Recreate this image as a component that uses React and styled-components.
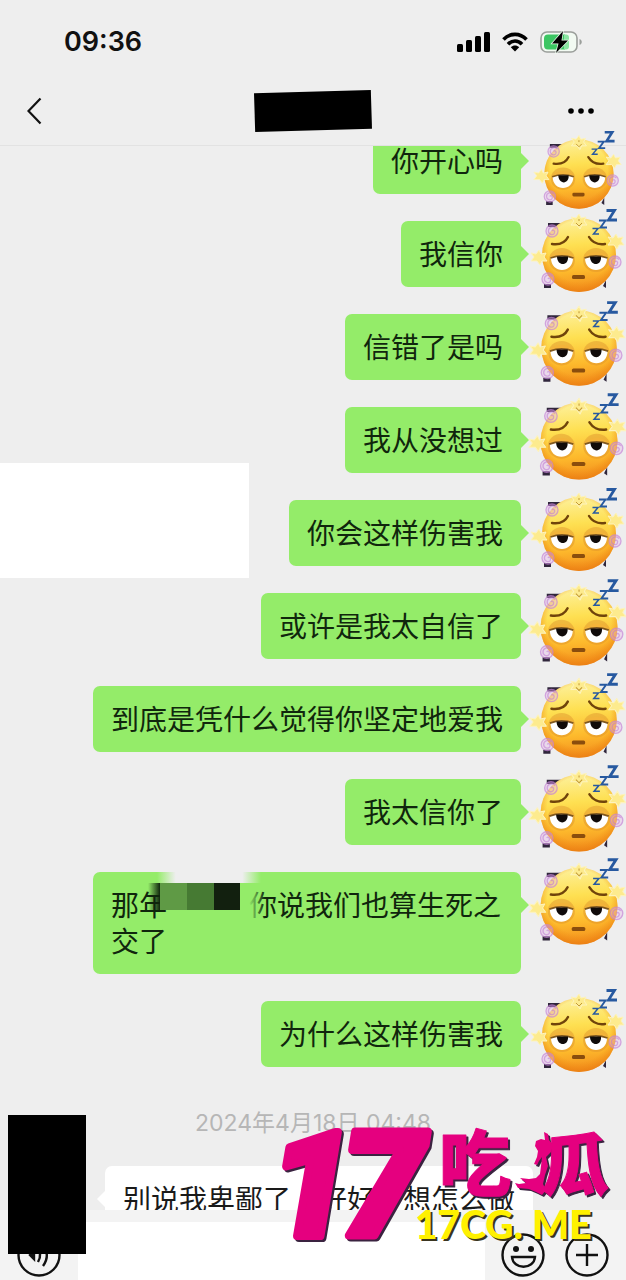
import React from 'react';
import styled, { createGlobalStyle } from 'styled-components';

const GlobalStyle = createGlobalStyle`
  * {
    box-sizing: border-box;
  }
  body {
    margin: 0;
    background: #eeeeee;
    font-family: Inter, "Noto Sans CJK SC", sans-serif;
    color: #111111;
  }
  button {
    display: block;
    border: 0;
    padding: 0;
    background: none;
    color: inherit;
    cursor: pointer;
  }
  svg {
    display: block;
    flex-shrink: 0;
  }
`;

const Page = styled.div`
  position: relative;
  display: flex;
  flex-direction: column;
  height: 100vh;
  overflow: hidden;
`;

const Header = styled.header`
  position: relative;
  z-index: 1;
  flex-shrink: 0;
  padding-bottom: 7px;
  background: #eeeeee;
  border-bottom: 1px solid #e2e2e2;
`;

const StatusBar = styled.div`
  display: flex;
  align-items: center;
  justify-content: space-between;
  height: 84px;
  padding: 0 42px 0 64px;
`;

const Clock = styled.time`
  font-size: 27px;
  font-weight: 600;
  line-height: 32px;
`;

const StatusIcons = styled.div`
  display: flex;
  align-items: center;
  gap: 12px;
`;

const NavBar = styled.nav`
  display: grid;
  grid-template-columns: 1fr auto 1fr;
  align-items: center;
  height: 54px;
  padding: 0 27px;
  > :last-child {
    justify-self: end;
  }
`;

const HiddenName = styled.div`
  width: 118px;
  height: 42px;
  background: #000000;
  clip-path: polygon(0 8%, 99% 0, 100% 92%, 1% 100%);
`;

const Chat = styled.main`
  flex: 1;
  min-height: 0;
  display: flex;
  flex-direction: column;
  gap: 27px;
  margin-top: -18px;
`;

const Row = styled.div`
  display: flex;
  flex-shrink: 0;
  justify-content: ${(props) => (props.$incoming ? 'flex-start' : 'flex-end')};
  gap: 9px;
  padding-left: ${(props) => (props.$incoming ? '105px' : '0')};
`;

const Bubble = styled.p`
  position: relative;
  max-width: 428px;
  margin: 0;
  padding: 14px 18px 16px;
  border-radius: 7px;
  background: ${(props) => (props.$incoming ? '#ffffff' : '#94ec69')};
  color: ${(props) => (props.$incoming ? '#1a1a1a' : '#10260d')};
  font-family: "Noto Sans CJK SC", sans-serif;
  font-size: 28px;
  line-height: 36px;
  &::after {
    content: '';
    position: absolute;
    top: 24px;
    ${(props) => (props.$incoming ? 'left' : 'right')}: -8px;
    width: 9px;
    height: 18px;
    background: inherit;
    clip-path: ${(props) => (props.$incoming
    ? 'polygon(100% 0, 100% 100%, 0 50%)'
    : 'polygon(0 0, 0 100%, 100% 50%)')};
  }
`;

const Avatar = styled.div`
  display: flex;
  align-items: ${(props) => props.$align || 'center'};
  justify-content: center;
  position: relative;
  z-index: 2;
  width: 96px;
  height: 66px;
`;

const DateLine = styled.time`
  flex-shrink: 0;
  padding-top: 13px;
  color: #b6b6b6;
  font-size: 23px;
  line-height: 32px;
  text-align: center;
`;

const Gap = styled.span`
  display: inline-block;
  position: relative;
  width: 82px;
  height: 28px;
  vertical-align: top;
`;

const Smudge = styled.span`
  position: absolute;
  top: -15px;
  left: -10px;
  width: 104px;
  height: 12px;
  background: linear-gradient(90deg, transparent, #eeeeee 18%, #eeeeee 82%, transparent);
`;

const Mosaic = styled.span`
  position: absolute;
  top: -3px;
  left: -19px;
  display: grid;
  grid-template-columns: 12px 27px 27px 26px;
  height: 27px;
  > span:nth-child(1) {
    background: linear-gradient(90deg, transparent, #10260d);
  }
  > span:nth-child(2) {
    background: #5f9a45;
  }
  > span:nth-child(3) {
    background: #467a33;
  }
  > span:nth-child(4) {
    background: #12200f;
  }
`;

const Fade = styled.span`
  position: absolute;
  z-index: 1;
  top: 0;
  left: 82px;
  width: 16px;
  height: 36px;
  background: linear-gradient(90deg, #94ec69, transparent);
`;

const Footer = styled.footer`
  position: relative;
  z-index: 1;
  flex-shrink: 0;
  display: flex;
  height: 70px;
  padding: 12px 17px 0;
  background: #f3f3f3;
`;

const IconButton = styled.button`
  flex-shrink: 0;
  width: 44px;
  height: 44px;
  margin-top: 11px;
`;

const MessageInput = styled.input`
  flex: 1;
  min-width: 0;
  margin: 0 16px 0 17px;
  border: 0;
  padding: 0 18px;
  background: #ffffff;
  font-size: 28px;
  outline: none;
`;

const Tools = styled.div`
  display: flex;
  gap: 20px;
`;

const Cover = styled.div`
  position: absolute;
  z-index: 3;
  background: ${(props) => props.$color};
`;

const SideCover = styled(Cover)`
  top: 463px;
  left: 0;
  width: 249px;
  height: 115px;
`;

const AvatarCover = styled(Cover)`
  bottom: 26px;
  left: 8px;
  width: 78px;
  height: 139px;
`;

const Watermark = styled.div`
  position: absolute;
  z-index: 4;
  right: 10px;
  bottom: 30px;
  pointer-events: none;
`;

const Signal = () => (
  <svg width="33" height="20" viewBox="0 0 33 20">
    <rect x="0" y="12" width="6" height="8" rx="1.5" />
    <rect x="9" y="8" width="6" height="12" rx="1.5" />
    <rect x="18" y="4" width="6" height="16" rx="1.5" />
    <rect x="27" y="0" width="6" height="20" rx="1.5" />
  </svg>
);

const Wifi = () => (
  <svg width="26" height="20" viewBox="0 0 26 20" fill="none" stroke="#000" strokeWidth="3.6">
    <path d="M1.5 7.5C8 0.6 18 0.6 24.5 7.5" />
    <path d="M6 12.2c4-4.2 10-4.2 14 0" />
    <path d="M8.8 15.2c2.5-2.4 5.9-2.4 8.4 0L13 19.6z" fill="#000" stroke="none" />
  </svg>
);

const Battery = () => (
  <svg width="44" height="24" viewBox="0 0 44 24">
    <rect x="1" y="2" width="36" height="20" rx="6" fill="#f2faf2" stroke="#9b9f9b" strokeWidth="1.6" />
    <path d="M8 4.5h17v15H8a4 4 0 0 1-4-4v-7a4 4 0 0 1 4-4z" fill="#3cc663" />
    <path d="M24 4.500h2a3 3 0 0 1 3 3v9a3 3 0 0 1-3 3h-2z" fill="#8be5a2" />
    <path d="M39.500 9c3 1 3 5 0 6z" fill="#9b9f9b" />
    <path d="M23 1L12 13.500h6.500L16 23l12-12.500h-6.500z" fill="#000" stroke="#effbf0" strokeWidth="1.400" paintOrder="stroke" />
  </svg>
);

const Swirl = ({ x, y }) => (
  <g transform={`translate(${x} ${y})`} fill="none" stroke="#c785d8" strokeWidth="1.300" opacity="0.700">
    <circle r="6" fill="#e3b4e8" fillOpacity="0.500" />
    <path d="M0 0c1-2 3.500 0 2.300 2.300C.8 4.700-3.600 3.500-3.600 0c0-4 5-5.500 7.600-2.500" />
  </g>
);

const Star = ({ x, y }) => (
  <path
    transform={`translate(${x} ${y})`}
    d="M0-7l2 4 5-1-2 4 3 4-5 0-2 4-3-4-6 0 3-4-3-4 5 1z"
    fill="#fdeb8e"
    stroke="#fdf3bd"
    strokeWidth="1"
    strokeLinejoin="round"
  />
);

const Sticker = ({ size }) => (
  <svg width={size} height={size} viewBox="0 0 96 96" role="img" aria-label="avatar">
    <defs>
      <linearGradient id="skin" x1="0.5" y1="0" x2="0.600" y2="1">
        <stop offset="0" stopColor="#fdf09a" />
        <stop offset="0.350" stopColor="#fee052" />
        <stop offset="0.700" stopColor="#fdb92c" />
        <stop offset="1" stopColor="#f28a1c" />
      </linearGradient>
      <radialGradient id="edge" cx="0.5" cy="0.450" r="0.550">
        <stop offset="0.750" stopColor="#f08a10" stopOpacity="0" />
        <stop offset="1" stopColor="#e87a10" stopOpacity="0.650" />
      </radialGradient>
    </defs>
    <path d="M18 17h15v4H18zM14 78h7v4h-7zM73 80l3-6v8z" fill="#30263c" />
    <circle cx="49" cy="49" r="37" fill="url(#skin)" />
    <circle cx="49" cy="49" r="37" fill="url(#edge)" />
    <Swirl x={22} y={25} />
    <Swirl x={18} y={73} />
    <Swirl x={85} y={56} />
    <Star x={9} y={51} />
    <Star x={49} y={15} />
    <Star x={86} y={35} />
    <path d="M46 17l3 3 3-3M49 13v2" fill="none" stroke="#c39b35" strokeWidth="1" />
    <g fill="none" stroke="#70440b" strokeWidth="2.400" strokeLinecap="round">
      <path d="M22 38c7 1 13-1 16-7" />
      <path d="M59 31c3 5 9 8 16 7" />
    </g>
    <g fill="#d98a2b" opacity="0.400">
      <ellipse cx="32" cy="54" rx="13" ry="12" />
      <ellipse cx="66" cy="54" rx="13" ry="12" />
    </g>
    <path d="M20 52c4-8 20-8 24 0M54 52c4-8 20-8 24 0" fill="#f3b33a" />
    <path d="M21 52c7-3 15-3 22 0 0 16-22 16-22 0zM55 52c7-3 15-3 22 0 0 16-22 16-22 0z" fill="#fff" />
    <path d="M20.500 52c8-3 15-3 23 0M54.500 52c8-3 15-3 23 0" fill="none" stroke="#80581f" strokeWidth="1.800" />
    <path d="M27 50.500h11c1 10-11 10-11 0zM60 50.500h11c1 10-11 10-11 0z" fill="#100b0a" />
    <rect x="42" y="69" width="13" height="4" rx="1.500" fill="#8a4d0d" />
    <g fill="none" stroke="#2759a0">
      <path d="M62.500 22.500h5.500l-4.500 5.500h5.500" strokeWidth="1.500" />
      <path d="M69 14.500h6.500l-5 7h6.500" strokeWidth="1.900" />
      <path d="M76.500 4.500h8l-6 9.500h8.500" strokeWidth="2.800" />
    </g>
  </svg>
);

const Logo = () => (
  <svg width="340" height="128" viewBox="276 1122 340 128" role="img" aria-label="17吃瓜 17CG. ME">
    <defs>
      <g id="brand" strokeLinejoin="round">
        <g fontFamily="Roboto, sans-serif" fontSize="146" fontWeight="900" fontStyle="italic" strokeWidth="8">
          <text x="270" y="1236">1</text>
          <text x="342" y="1236">7</text>
        </g>
        <g fontFamily="'Noto Sans CJK SC', sans-serif" fontWeight="900" strokeWidth="1">
          <text x="439" y="1190" fontSize="72">吃</text>
          <text x="541" y="1190" fontSize="68">瓜</text>
        </g>
        <path
          stroke="none"
          d="M544 1132l4 2 1 6 4 5-2 7-5 5 2 9-3 9-2 9 3 6-4 5-6-3-7-3-11-1-3-5 4 1 7-1-6-5 9 1 7-1 4-4 1-8 1-9-3 4-2 4-3-1 3-7 1-6-3-5 1-5 5-2 4 1z"
        />
      </g>
      <text id="site" x="415" y="1239" fontFamily="Lato, sans-serif" fontSize="39" fontWeight="900">17CG. ME</text>
    </defs>
    <use href="#brand" x="2" y="2" fill="#3a2340" stroke="#3a2340" />
    <use href="#brand" fill="#e5007f" stroke="#e5007f" />
    <use href="#site" x="2" y="2" fill="#3a3520" />
    <use href="#site" fill="#fff100" />
  </svg>
);

const messages = [
  { text: '你开心吗', size: 90, align: 'flex-start' },
  { text: '我信你', size: 96 },
  { text: '信错了是吗', size: 98 },
  { text: '我从没想过', size: 100 },
  { text: '你会这样伤害我', size: 96 },
  { text: '或许是我太自信了', size: 100 },
  { text: '到底是凭什么觉得你坚定地爱我', size: 98 },
  { text: '我太信你了', size: 100 },
  { text: '那年', rest: '你说我们也算生死之交了', size: 100 },
  { text: '为什么这样伤害我', size: 96 },
];

const Message = ({ text, rest, size, align }) => (
  <Row>
    <Bubble>
      {text}
      {rest && (
        <Gap>
          <Smudge />
          <Mosaic>
            <span />
            <span />
            <span />
            <span />
          </Mosaic>
          <Fade />
        </Gap>
      )}
      {rest}
    </Bubble>
    <Avatar $align={align}>
      <Sticker size={size} />
    </Avatar>
  </Row>
);

const App = () => (
  <>
    <GlobalStyle />
    <Page>
      <Header>
        <StatusBar>
          <Clock>09:36</Clock>
          <StatusIcons>
            <Signal />
            <Wifi />
            <Battery />
          </StatusIcons>
        </StatusBar>
        <NavBar>
          <button type="button" aria-label="Back">
            <svg width="16" height="28" viewBox="0 0 16 28" fill="none" stroke="#111" strokeWidth="2.200">
              <path d="M13.500 1.500L1.500 14l12 12.500" />
            </svg>
          </button>
          <HiddenName />
          <button type="button" aria-label="More">
            <svg width="34" height="8" viewBox="0 0 34 8">
              <circle cx="6" cy="4" r="2.800" />
              <circle cx="16" cy="4" r="2.800" />
              <circle cx="26" cy="4" r="2.800" />
            </svg>
          </button>
        </NavBar>
      </Header>
      <Chat>
        {messages.map((message) => (
          <Message key={message.text} {...message} />
        ))}
        <DateLine>2024年4月18日 04:48</DateLine>
        <Row $incoming>
          <Bubble $incoming>{'别说我卑鄙了\u3000好好\u3000想怎么做'}</Bubble>
        </Row>
      </Chat>
      <Footer>
        <IconButton type="button" aria-label="Voice">
          <svg width="44" height="44" viewBox="0 0 44 44" fill="none" stroke="#111" strokeWidth="2.400">
            <circle cx="22" cy="22" r="20.500" />
            <path d="M13 22l4-4v8z" fill="#111" />
            <path d="M20 14c4 5 4 10 1 15M25 11c6 7 6 15 1 22" />
          </svg>
        </IconButton>
        <MessageInput type="text" aria-label="Message" />
        <Tools>
          <IconButton type="button" aria-label="Emoji">
            <svg width="44" height="44" viewBox="0 0 44 44" fill="none" stroke="#111" strokeWidth="2.400">
              <circle cx="22" cy="22" r="20.500" />
              <circle cx="15" cy="16" r="3" fill="#111" stroke="none" />
              <circle cx="30" cy="16" r="3" fill="#111" stroke="none" />
              <path d="M11 24h23c-1 13-22 13-23 0z" />
            </svg>
          </IconButton>
          <IconButton type="button" aria-label="Add">
            <svg width="44" height="44" viewBox="0 0 44 44" fill="none" stroke="#111" strokeWidth="2.400">
              <circle cx="22" cy="22" r="20.500" />
              <path d="M22 11v22M11 22h22" />
            </svg>
          </IconButton>
        </Tools>
      </Footer>
      <SideCover $color="#ffffff" />
      <AvatarCover $color="#000000" />
      <Watermark>
        <Logo />
      </Watermark>
    </Page>
  </>
);

export default App;
